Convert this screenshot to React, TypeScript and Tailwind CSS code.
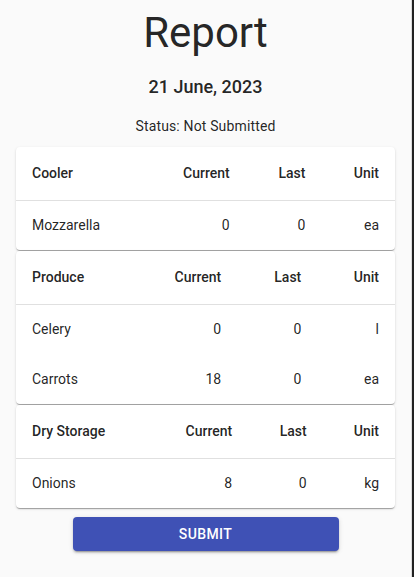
import React from "react";

type Row = { name: string; current: number; last: number; unit: string };
type Section = { title: string; rows: Row[] };

const sections: Section[] = [
  { title: "Cooler", rows: [{ name: "Mozzarella", current: 0, last: 0, unit: "ea" }] },
  {
    title: "Produce",
    rows: [
      { name: "Celery", current: 0, last: 0, unit: "l" },
      { name: "Carrots", current: 18, last: 0, unit: "ea" },
    ],
  },
  { title: "Dry Storage", rows: [{ name: "Onions", current: 8, last: 0, unit: "kg" }] },
];

const SectionTable: React.FC<{ section: Section }> = ({ section }) => (
  <div className="bg-white rounded shadow-[0_2px_1px_-1px_rgba(0,0,0,0.2),0_1px_1px_0_rgba(0,0,0,0.14),0_1px_3px_0_rgba(0,0,0,0.12)]">
    <table className="w-full border-collapse text-sm text-[rgba(0,0,0,0.87)]">
      <thead>
        <tr className="h-[53px] border-b border-[#e0e0e0]">
          <th className="px-4 text-left font-medium">{section.title}</th>
          <th className="px-4 text-right font-medium">Current</th>
          <th className="px-4 text-right font-medium">Last</th>
          <th className="px-4 text-right font-medium">Unit</th>
        </tr>
      </thead>
      <tbody>
        {section.rows.map((r) => (
          <tr key={r.name} className="h-[50px]">
            <td className="px-4 text-left">{r.name}</td>
            <td className="px-4 text-right">{r.current}</td>
            <td className="px-4 text-right">{r.last}</td>
            <td className="px-4 text-right">{r.unit}</td>
          </tr>
        ))}
      </tbody>
    </table>
  </div>
);

export default function App() {
  return (
    <div className="flex h-[577px] w-[414px] bg-[#fafafa] font-['Roboto',sans-serif] text-[rgba(0,0,0,0.87)]">
      <main className="flex-1 border-r border-[#dcdcdc] px-4 pt-[7px]">
        <h1 className="text-center text-[42px] leading-[52px] font-normal">Report</h1>
        <h2 className="mt-[14px] text-center text-lg leading-[28px] font-medium">21 June, 2023</h2>
        <p className="mt-[14px] text-center text-sm leading-[22px] tracking-[0.15px]">Status: Not Submitted</p>
        <div className="mt-[10px] flex flex-col gap-px">
          {sections.map((s) => (
            <SectionTable key={s.title} section={s} />
          ))}
        </div>
        <div className="mt-[9px] flex justify-center">
          <button className="h-[34px] w-[266px] rounded bg-[#3f51b5] text-sm font-medium uppercase tracking-[0.4px] text-white shadow-[0_3px_1px_-2px_rgba(0,0,0,0.2),0_2px_2px_0_rgba(0,0,0,0.14),0_1px_5px_0_rgba(0,0,0,0.12)]">
            Submit
          </button>
        </div>
      </main>
      <div className="w-[2px] bg-[#222]" />
    </div>
  );
}
